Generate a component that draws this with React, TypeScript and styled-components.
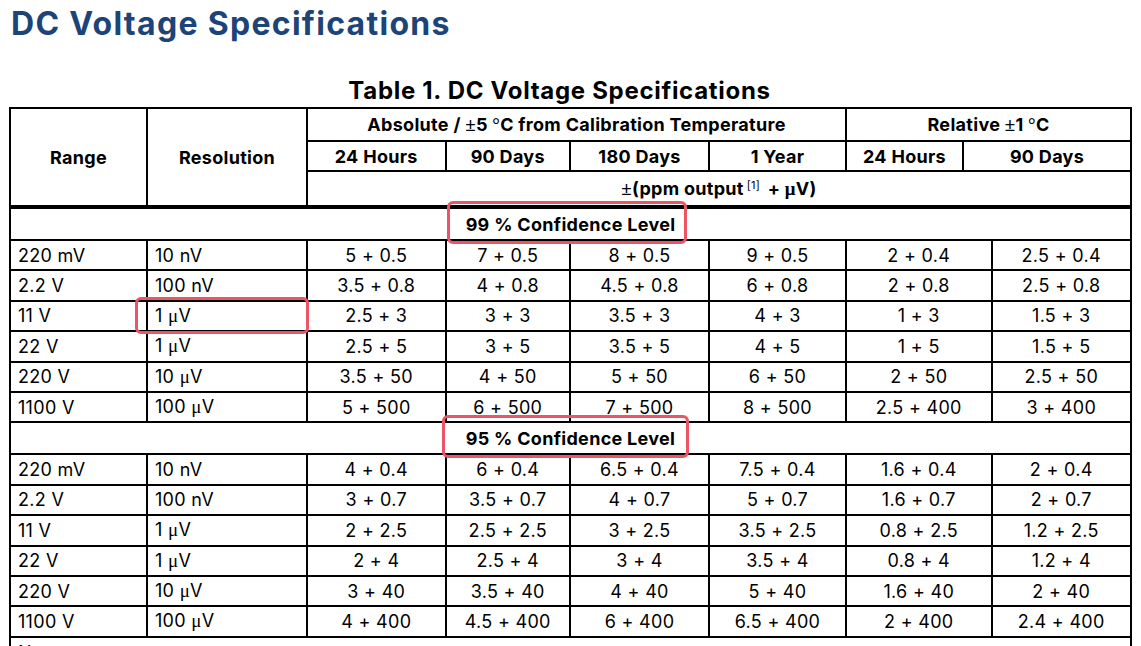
import React from 'react';
import styled, { createGlobalStyle } from 'styled-components';

const Global = createGlobalStyle`
  html, body { margin: 0; padding: 0; background: #fff; }
  body { font-family: Inter, "Noto Sans", sans-serif; color: #000; overflow: hidden; }
`;

const Page = styled.div`
  position: relative;
  padding: 6px 0 0 9px;
`;

const Title = styled.h1`
  margin: 0;
  padding-left: 2px;
  font-size: 32px;
  line-height: 36px;
  font-weight: 700;
  letter-spacing: 1.3px;
  color: #1c4478;
`;

const Caption = styled.div`
  margin: 36px 0 3px;
  width: 1123px;
  padding-right: 22px;
  box-sizing: border-box;
  text-align: center;
  font-size: 24px;
  line-height: 26px;
  font-weight: 700;
  letter-spacing: 0.7px;
`;

const Table = styled.table`
  width: 1123px;
  table-layout: fixed;
  border-collapse: collapse;
  border: 2px solid #000;
  font-size: 18px;
  letter-spacing: 0.3px;
`;

const Head = styled.thead`
  border-bottom: 4px solid #000;
`;

const HeadRow = styled.tr<{ $h: number }>`
  height: ${(p) => p.$h}px;
`;

const Th = styled.th`
  border: 2px solid #000;
  padding: 0 2px;
  font-weight: 700;
  text-align: center;
  vertical-align: middle;
  white-space: nowrap;
`;

const BodyRow = styled.tr<{ $h: number }>`
  height: ${(p) => p.$h}px;
`;

const Td = styled.td<{ $align?: 'left' | 'center' }>`
  border: 2px solid #000;
  padding: 0 7px;
  text-align: ${(p) => p.$align ?? 'center'};
  vertical-align: middle;
  white-space: nowrap;
  font-weight: 400;
`;

const LevelCell = styled.td`
  border: 2px solid #000;
  text-align: center;
  vertical-align: middle;
  font-weight: 700;
`;

const NotesCell = styled.td`
  border-left: 2px solid #000;
  border-right: 2px solid #000;
  border-bottom: none;
  padding: 4px 7px;
  height: 40px;
  vertical-align: top;
`;

const Sym = styled.span`
  font-family: "Liberation Serif", "DejaVu Serif", serif;
  font-size: 1.05em;
`;

const Sup = styled.sup`
  font-size: 11px;
  font-weight: 400;
  vertical-align: 6px;
  line-height: 0;
  margin: 0 3px;
`;

const Mark = styled.div`
  position: absolute;
  border: 3.5px solid #eb5565;
  border-radius: 6px;
  box-sizing: border-box;
  pointer-events: none;
`;

const fmt = (s: string) =>
  s.split(/([μ±°])/).map((part, i) =>
    /^[μ±°]$/.test(part) ? <Sym key={i}>{part}</Sym> : <React.Fragment key={i}>{part}</React.Fragment>
  );

type Row = [string, string, string, string, string, string, string, string];

const level99: Row[] = [
  ['220 mV', '10 nV', '5 + 0.5', '7 + 0.5', '8 + 0.5', '9 + 0.5', '2 + 0.4', '2.5 + 0.4'],
  ['2.2 V', '100 nV', '3.5 + 0.8', '4 + 0.8', '4.5 + 0.8', '6 + 0.8', '2 + 0.8', '2.5 + 0.8'],
  ['11 V', '1 μV', '2.5 + 3', '3 + 3', '3.5 + 3', '4 + 3', '1 + 3', '1.5 + 3'],
  ['22 V', '1 μV', '2.5 + 5', '3 + 5', '3.5 + 5', '4 + 5', '1 + 5', '1.5 + 5'],
  ['220 V', '10 μV', '3.5 + 50', '4 + 50', '5 + 50', '6 + 50', '2 + 50', '2.5 + 50'],
  ['1100 V', '100 μV', '5 + 500', '6 + 500', '7 + 500', '8 + 500', '2.5 + 400', '3 + 400'],
];

const level95: Row[] = [
  ['220 mV', '10 nV', '4 + 0.4', '6 + 0.4', '6.5 + 0.4', '7.5 + 0.4', '1.6 + 0.4', '2 + 0.4'],
  ['2.2 V', '100 nV', '3 + 0.7', '3.5 + 0.7', '4 + 0.7', '5 + 0.7', '1.6 + 0.7', '2 + 0.7'],
  ['11 V', '1 μV', '2 + 2.5', '2.5 + 2.5', '3 + 2.5', '3.5 + 2.5', '0.8 + 2.5', '1.2 + 2.5'],
  ['22 V', '1 μV', '2 + 4', '2.5 + 4', '3 + 4', '3.5 + 4', '0.8 + 4', '1.2 + 4'],
  ['220 V', '10 μV', '3 + 40', '3.5 + 40', '4 + 40', '5 + 40', '1.6 + 40', '2 + 40'],
  ['1100 V', '100 μV', '4 + 400', '4.5 + 400', '6 + 400', '6.5 + 400', '2 + 400', '2.4 + 400'],
];

const colWidths = [137, 160, 138.5, 124.5, 139, 137, 117, 28.5, 139.5];

const DataRows = ({ rows }: { rows: Row[] }) => (
  <>
    {rows.map((r, i) => (
      <BodyRow key={i} $h={30.4}>
        <Td $align="left">{fmt(r[0])}</Td>
        <Td $align="left">{fmt(r[1])}</Td>
        <Td>{r[2]}</Td>
        <Td>{r[3]}</Td>
        <Td>{r[4]}</Td>
        <Td>{r[5]}</Td>
        <Td colSpan={2}>{r[6]}</Td>
        <Td>{r[7]}</Td>
      </BodyRow>
    ))}
  </>
);

export default function App() {
  return (
    <>
      <Global />
      <Page>
        <Title>DC Voltage Specifications</Title>
        <Caption>Table 1. DC Voltage Specifications</Caption>
        <Table>
          <colgroup>
            {colWidths.map((w, i) => (
              <col key={i} style={{ width: `${w}px` }} />
            ))}
          </colgroup>
          <Head>
            <HeadRow $h={33}>
              <Th rowSpan={3}>Range</Th>
              <Th rowSpan={3}>Resolution</Th>
              <Th colSpan={4}>Absolute / {fmt('±')}5 {fmt('°')}C from Calibration Temperature</Th>
              <Th colSpan={3}>Relative {fmt('±')}1 {fmt('°')}C</Th>
            </HeadRow>
            <HeadRow $h={30}>
              <Th>24 Hours</Th>
              <Th>90 Days</Th>
              <Th>180 Days</Th>
              <Th>1 Year</Th>
              <Th>24 Hours</Th>
              <Th colSpan={2}>90 Days</Th>
            </HeadRow>
            <HeadRow $h={36}>
              <Th colSpan={7}>
                {fmt('±')}(ppm output<Sup>[1]</Sup> + {fmt('μ')}V)
              </Th>
            </HeadRow>
          </Head>
          <tbody>
            <BodyRow $h={33}>
              <LevelCell colSpan={9}>99 % Confidence Level</LevelCell>
            </BodyRow>
            <DataRows rows={level99} />
            <BodyRow $h={32}>
              <LevelCell colSpan={9}>95 % Confidence Level</LevelCell>
            </BodyRow>
            <DataRows rows={level95} />
            <tr>
              <NotesCell colSpan={9}>Notes</NotesCell>
            </tr>
          </tbody>
        </Table>
        <Mark style={{ left: 447, top: 201, width: 240, height: 43 }} />
        <Mark style={{ left: 135, top: 297, width: 174, height: 37 }} />
        <Mark style={{ left: 442, top: 415, width: 247, height: 43 }} />
      </Page>
    </>
  );
}
